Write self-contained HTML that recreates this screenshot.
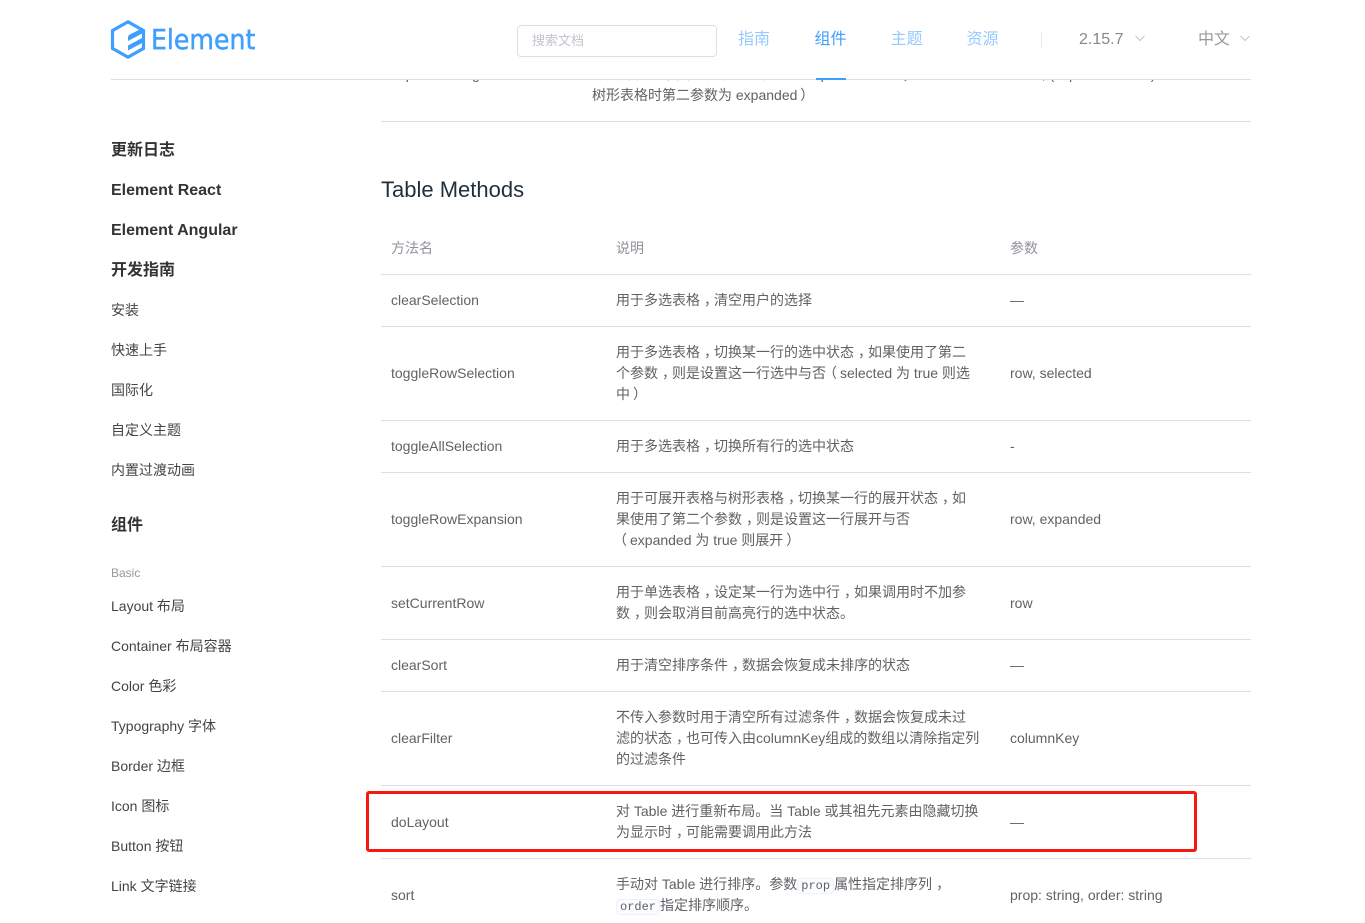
<!DOCTYPE html>
<html lang="zh"><head><meta charset="utf-8"><title>Element</title>
<style>
html,body{margin:0;padding:0;background:#fff;width:1365px;height:923px;overflow:hidden}
body{position:relative;font-family:"Liberation Sans","Noto Sans CJK SC",sans-serif;color:#5e6d82;font-size:14px}
.t{position:absolute;white-space:nowrap;line-height:21px;height:21px}
.l{position:absolute;height:1px;background:#dcdfe6;left:381px;width:870px}
.b{color:#333;font-weight:700;font-size:16px}
.s{color:#444;font-size:14px}
.th{color:#909399}
.c{color:#606266}
.n{font-size:16px;color:#409eff;opacity:.55}
code{font-family:"Liberation Mono",monospace;font-size:12px;background:#fbfcff;border:1px solid #eef1fb;border-radius:4px;padding:0 3px;color:#5e6266}
i,u,s{font-style:normal;text-decoration:none;position:relative}
i{left:4px}
u{left:-3px}
s{left:3px}
</style></head><body>
<div class="t c" style="left:391px;top:64px">expand-change</div>
<div class="t c" style="left:592px;top:64px"><u>（</u>展开行时<i>，</i>回调的第二个参数为 expandedRows；</div>
<div class="t c" style="left:1020px;top:64px">row, (expandedRows)</div>
<div style="position:absolute;left:0;top:0;width:1365px;height:79px;background:#fff"></div>
<div class="l" style="left:111px;width:1140px;top:79px"></div>
<div style="position:absolute;left:816px;top:78px;width:30px;height:2px;background:#409eff"></div>
<svg style="position:absolute;left:110px;top:20px" width="36" height="39" viewBox="0 0 36 39"><path d="M18 1.800L33.500 10.600V28.400L18 37.200L2.500 28.400V10.600Z" fill="none" stroke="#409eff" stroke-width="3.200"/><path d="M18 17.500Q18 15.500 20 14.400L33 8V13L18 21ZM18 25.500L33 17.500V22.500L18 30.500Z" fill="#409eff"/></svg>
<div class="t" style="left:151px;top:23px;height:34px;line-height:34px;font-family:'DejaVu Sans',sans-serif;font-size:28px;color:#409eff;-webkit-text-stroke:.5px #409eff;transform:scaleX(.9);transform-origin:left">Element</div>
<div style="position:absolute;left:517px;top:25px;width:198px;height:30px;border:1px solid #dcdfe6;border-radius:4px"></div>
<div class="t" style="left:532px;top:30px;font-size:13px;color:#c0c4cc">搜索文档</div>
<div class="t n" style="left:738px;top:29px">指南</div>
<div class="t" style="left:814.500px;top:29px;font-size:16px;color:#409eff">组件</div>
<div class="t n" style="left:890.500px;top:29px">主题</div>
<div class="t n" style="left:966.500px;top:29px">资源</div>
<div style="position:absolute;left:1041px;top:32px;width:1px;height:16px;background:#ebebeb"></div>
<div class="t" style="left:1079px;top:29px;font-size:16px;color:#888">2.15.7</div>
<svg style="position:absolute;left:1135px;top:35px" width="10" height="7"><path d="M.5 1L5 5.500L9.500 1" fill="none" stroke="#c0c4cc"/></svg>
<div class="t" style="left:1198px;top:29px;font-size:16px;color:#999">中文</div>
<svg style="position:absolute;left:1240px;top:35px" width="10" height="7"><path d="M.5 1L5 5.500L9.500 1" fill="none" stroke="#c0c4cc"/></svg>

<div class="t c" style="left:592px;top:85px">树形表格时第二参数为 expanded <s style="left:-1px">）</s></div>
<div class="l" style="top:121px"></div>

<div class="t b" style="left:111px;top:140px">更新日志</div>
<div class="t b" style="left:111px;top:180px">Element React</div>
<div class="t b" style="left:111px;top:220px">Element Angular</div>
<div class="t b" style="left:111px;top:260px">开发指南</div>
<div class="t s" style="left:111px;top:300px">安装</div>
<div class="t s" style="left:111px;top:340px">快速上手</div>
<div class="t s" style="left:111px;top:380px">国际化</div>
<div class="t s" style="left:111px;top:420px">自定义主题</div>
<div class="t s" style="left:111px;top:460px">内置过渡动画</div>
<div class="t b" style="left:111px;top:515px">组件</div>
<div class="t" style="left:111px;top:563px;font-size:12px;color:#999">Basic</div>
<div class="t s" style="left:111px;top:596px">Layout 布局</div>
<div class="t s" style="left:111px;top:636px">Container 布局容器</div>
<div class="t s" style="left:111px;top:676px">Color 色彩</div>
<div class="t s" style="left:111px;top:716px">Typography 字体</div>
<div class="t s" style="left:111px;top:756px">Border 边框</div>
<div class="t s" style="left:111px;top:796px">Icon 图标</div>
<div class="t s" style="left:111px;top:836px">Button 按钮</div>
<div class="t s" style="left:111px;top:876px">Link 文字链接</div>

<div class="t" style="left:381px;top:175px;height:30px;line-height:30px;font-size:22px;color:#1f2f3d">Table Methods</div>
<div class="t th" style="left:391px;top:238px">方法名</div>
<div class="t th" style="left:616px;top:238px">说明</div>
<div class="t th" style="left:1010px;top:238px">参数</div>

<div class="l" style="top:274px"></div>
<div class="t c" style="left:391px;top:290px">clearSelection</div>
<div class="t c" style="left:616px;top:290px">用于多选表格<i>，</i>清空用户的选择</div>
<div class="t c" style="left:1010px;top:290px">—</div>
<div class="l" style="top:326px"></div>
<div class="t c" style="left:391px;top:363px">toggleRowSelection</div>
<div class="t c" style="left:616px;top:342px">用于多选表格<i>，</i>切换某一行的选中状态<i>，</i>如果使用了第二</div>
<div class="t c" style="left:616px;top:363px">个参数<i>，</i>则是设置这一行选中与否<u>（</u>selected 为 true 则选</div>
<div class="t c" style="left:616px;top:384px">中<s>）</s></div>
<div class="t c" style="left:1010px;top:363px">row, selected</div>
<div class="l" style="top:420px"></div>
<div class="t c" style="left:391px;top:436px">toggleAllSelection</div>
<div class="t c" style="left:616px;top:436px">用于多选表格<i>，</i>切换所有行的选中状态</div>
<div class="t c" style="left:1010px;top:436px">-</div>
<div class="l" style="top:472px"></div>
<div class="t c" style="left:391px;top:509px">toggleRowExpansion</div>
<div class="t c" style="left:616px;top:488px">用于可展开表格与树形表格<i>，</i>切换某一行的展开状态<i>，</i>如</div>
<div class="t c" style="left:616px;top:509px">果使用了第二个参数<i>，</i>则是设置这一行展开与否</div>
<div class="t c" style="left:616px;top:530px"><u>（</u>expanded 为 true 则展开<s>）</s></div>
<div class="t c" style="left:1010px;top:509px">row, expanded</div>
<div class="l" style="top:566px"></div>
<div class="t c" style="left:391px;top:593px">setCurrentRow</div>
<div class="t c" style="left:616px;top:582px">用于单选表格<i>，</i>设定某一行为选中行<i>，</i>如果调用时不加参</div>
<div class="t c" style="left:616px;top:603px">数<i>，</i>则会取消目前高亮行的选中状态。</div>
<div class="t c" style="left:1010px;top:593px">row</div>
<div class="l" style="top:639px"></div>
<div class="t c" style="left:391px;top:655px">clearSort</div>
<div class="t c" style="left:616px;top:655px">用于清空排序条件<i>，</i>数据会恢复成未排序的状态</div>
<div class="t c" style="left:1010px;top:655px">—</div>
<div class="l" style="top:691px"></div>
<div class="t c" style="left:391px;top:728px">clearFilter</div>
<div class="t c" style="left:616px;top:707px">不传入参数时用于清空所有过滤条件<i>，</i>数据会恢复成未过</div>
<div class="t c" style="left:616px;top:728px">滤的状态<i>，</i>也可传入由columnKey组成的数组以清除指定列</div>
<div class="t c" style="left:616px;top:749px">的过滤条件</div>
<div class="t c" style="left:1010px;top:728px">columnKey</div>
<div class="l" style="top:785px"></div>
<div class="t c" style="left:391px;top:812px">doLayout</div>
<div class="t c" style="left:616px;top:801px">对 Table 进行重新布局。当 Table 或其祖先元素由隐藏切换</div>
<div class="t c" style="left:616px;top:822px">为显示时<i>，</i>可能需要调用此方法</div>
<div class="t c" style="left:1010px;top:812px">—</div>
<div class="l" style="top:858px"></div>
<div class="t c" style="left:391px;top:885px">sort</div>
<div class="t c" style="left:616px;top:874px">手动对 Table 进行排序。参数<code>prop</code>属性指定排序列<i>，</i></div>
<div class="t c" style="left:616px;top:895px"><code>order</code>指定排序顺序。</div>
<div class="t c" style="left:1010px;top:885px">prop: string, order: string</div>

<div style="position:absolute;left:366px;top:791px;width:825px;height:55px;border:3px solid #f5190f;border-radius:3px"></div>
</body></html>
